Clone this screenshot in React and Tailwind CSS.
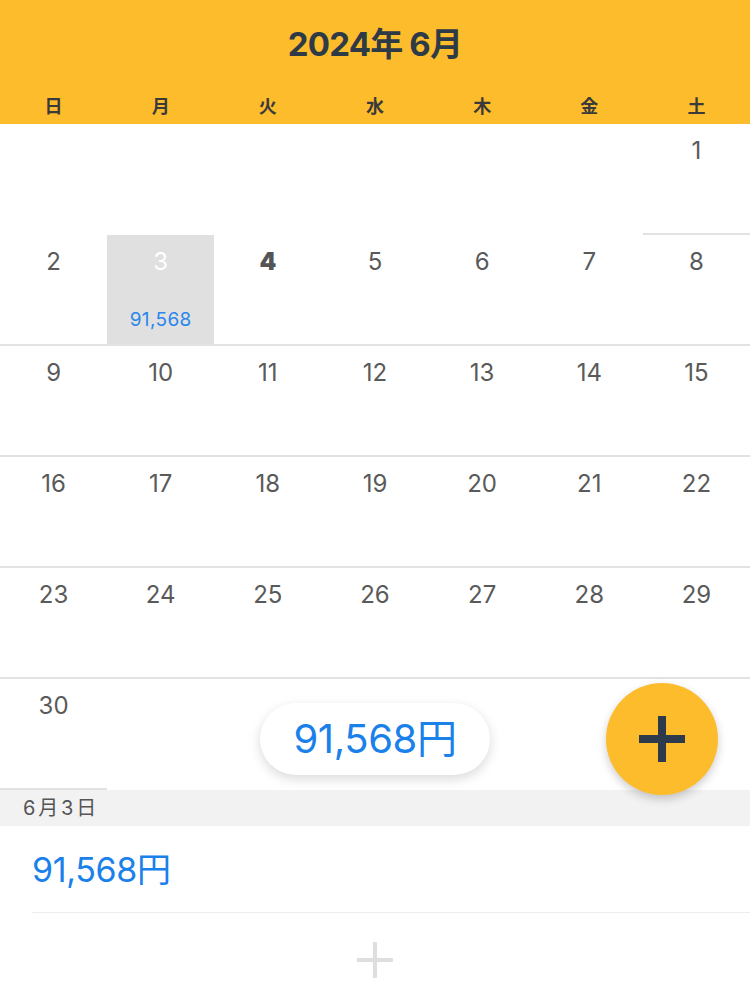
import React from 'react';

const WEEKDAYS = ['日', '月', '火', '水', '木', '金', '土'];

// June 2024 starts on Saturday
const WEEKS = [
  [null, null, null, null, null, null, 1],
  [2, 3, 4, 5, 6, 7, 8],
  [9, 10, 11, 12, 13, 14, 15],
  [16, 17, 18, 19, 20, 21, 22],
  [23, 24, 25, 26, 27, 28, 29],
  [30, null, null, null, null, null, null],
];

const SELECTED = 3;
const TODAY = 4;
const AMOUNTS = { 3: '91,568' };

const font = { fontFamily: '"Inter", "Noto Sans CJK JP", sans-serif' };

function DayCell({ day }) {
  if (!day) return <div className="h-[111px]" />;
  const selected = day === SELECTED;
  return (
    <div
      className={`h-[111px] border-b-2 border-[#e2e2e2] flex flex-col items-center pt-[13px] ${
        selected ? 'bg-[#e0e0e0]' : 'bg-white'
      }`}
    >
      <span
        className={`text-[24px] leading-[28px] ${
          selected ? 'text-white' : day === TODAY ? 'font-black text-[#555]' : 'text-[#5a5a5a]'
        }`}
      >
        {day}
      </span>
      {AMOUNTS[day] && (
        <span className="mt-[33px] text-[19px] leading-[22px] text-[#2b86ec] tracking-[0.02em]">
          {AMOUNTS[day]}
        </span>
      )}
    </div>
  );
}

export default function App() {
  return (
    <div className="relative w-[750px] h-[985px] overflow-hidden bg-white" style={font}>
      {/* Header */}
      <div className="bg-[#fdbc2c] h-[124px] flex flex-col items-center">
        <h1 className="mt-[24px] text-[33px] leading-[40px] font-bold text-[#2e3a46] tracking-tight">
          2024年 6月
        </h1>
        <div className="mt-[32px] w-full grid grid-cols-7">
          {WEEKDAYS.map((w) => (
            <div key={w} className="text-center text-[18px] leading-[22px] font-bold text-[#3a3a3a]">
              {w}
            </div>
          ))}
        </div>
      </div>

      {/* Calendar */}
      <div className="grid grid-cols-7">
        {WEEKS.flat().map((d, i) => (
          <DayCell key={i} day={d} />
        ))}
      </div>

      {/* Selected day list */}
      <div className="bg-[#f2f2f2] h-[36px] flex items-center pl-[23px] text-[20px] text-[#555] tracking-[0.14em]">
        6月3日
      </div>
      <div className="ml-[32px] h-[87px] border-b border-[#ececec] flex items-center">
        <span className="text-[34px] text-[#1a80ea] tracking-[-0.01em]">91,568円</span>
      </div>
      <div className="flex justify-center pt-[28px]">
        <svg width="38" height="38" viewBox="0 0 38 38">
          <path d="M19 1v36M1 19h36" stroke="#dedede" strokeWidth="4" />
        </svg>
      </div>

      {/* Floating total */}
      <div className="absolute left-[260px] top-[703px] w-[230px] h-[72px] rounded-full bg-white shadow-[0_4px_12px_rgba(0,0,0,0.15)] flex items-center justify-center">
        <span className="text-[40px] text-[#1a80ea] tracking-[-0.01em]">91,568円</span>
      </div>

      {/* FAB */}
      <button className="absolute left-[606px] top-[683px] w-[112px] h-[112px] rounded-full bg-[#fdbc2c] shadow-[0_4px_10px_rgba(0,0,0,0.2)] flex items-center justify-center">
        <svg width="46" height="46" viewBox="0 0 46 46">
          <path d="M23 0v46M0 23h46" stroke="#2c3a4b" strokeWidth="8" />
        </svg>
      </button>
    </div>
  );
}
